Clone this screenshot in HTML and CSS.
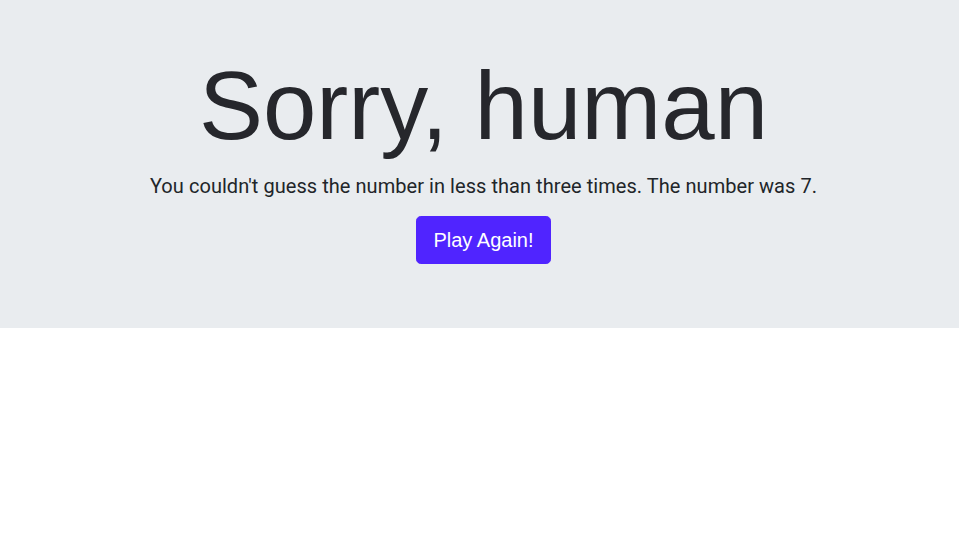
FILE: index.html
```html
<!DOCTYPE html>
<html lang="en">
<head>
<meta charset="utf-8">
<title>Sorry, human</title>
<link rel="stylesheet" href="styles.css">
</head>
<body>
<section class="jumbotron">
  <h1 class="title">Sorry, human</h1>
  <p class="lead">You couldn't guess the number in less than three times. The number was 7.</p>
  <button class="btn" type="button">Play Again!</button>
</section>
</body>
</html>
```
FILE: styles.css
```css
* { box-sizing: border-box; }
html, body { margin: 0; padding: 0; background: #fff; }
body { font-family: "Liberation Sans", Arial, sans-serif; color: #212529; }
.jumbotron {
  background: #e9ecef;
  padding: 48px 0 64px 8px;
  display: flex;
  flex-direction: column;
  align-items: center;
  text-align: center;
}
.title {
  margin: 0 0 8px;
  font-size: 96px;
  line-height: 115.2px;
  font-weight: 400;
  color: #26272c;
}
.lead {
  margin: 0 0 15px;
  font-family: Roboto, "Liberation Sans", sans-serif;
  font-size: 20px;
  line-height: 30px;
  font-weight: 400;
  letter-spacing: 0.05px;
  color: #212529;
}
.btn {
  font-family: "Liberation Sans", Arial, sans-serif;
  font-size: 20px;
  line-height: 30px;
  padding: 8px 16px;
  border: 1px solid #5024ff;
  border-radius: 4.8px;
  background: #5024ff;
  color: #fff;
  cursor: pointer;
}
```
